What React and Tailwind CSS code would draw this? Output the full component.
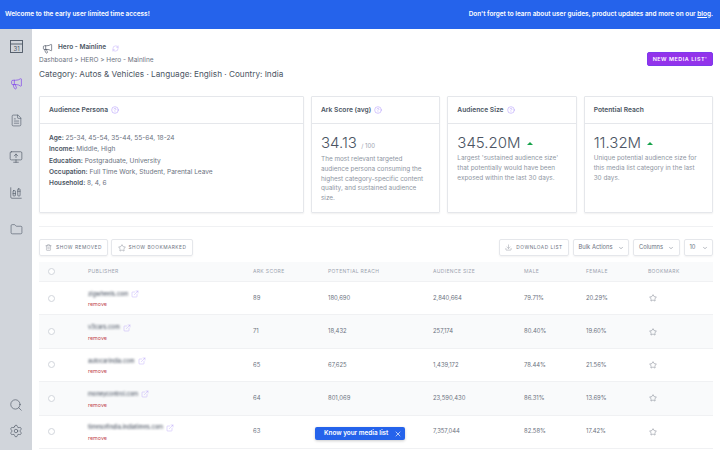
import React from "react";
import { Megaphone, FileText, MonitorUp, Folder, Search, Settings, RefreshCw, HelpCircle, ExternalLink, Star, Trash2, Download, ChevronDown, X, ChartColumnStacked } from "lucide-react";

const rows = [
  ["zigwheels.com", 89, "180,690", "2,840,664", "79.71%", "20.29%"],
  ["v3cars.com", 71, "18,432", "257,174", "80.40%", "19.60%"],
  ["autocarindia.com", 65, "67,625", "1,439,172", "78.44%", "21.56%"],
  ["moneycontrol.com", 64, "801,069", "23,590,430", "86.31%", "13.69%"],
  ["timesofindia.indiatimes.com", 63, "", "7,357,044", "82.58%", "17.42%"],
];

function Q() {
  return <HelpCircle size={8} strokeWidth={1.4} className="text-[#a78bfa] shrink-0" />;
}

function Card({ title, q = true, className, children }) {
  return (
    <div className={"border border-[#e5e7eb] rounded-[1px] flex flex-col shadow-[0_1px_2px_rgba(0,0,0,0.06)] " + className}>
      <div className="h-[27px] shrink-0 border-b border-[#e5e7eb] flex items-center gap-[3px] px-[9px] text-[6.7px] font-semibold text-[#4b5563]">
        {title}
        {q && <Q />}
      </div>
      <div className="flex-1 px-[9px]">{children}</div>
    </div>
  );
}

function Btn({ children, className = "" }) {
  return (
    <div className={"h-[17px] shrink-0 whitespace-nowrap border border-[#e5e7eb] rounded-[2px] flex items-center text-[#6b7280] shadow-[0_1px_2px_rgba(0,0,0,0.05)] " + className}>
      {children}
    </div>
  );
}

function Triangle() {
  return <span className="w-0 h-0 border-l-[3px] border-r-[3px] border-b-[3.5px] border-l-transparent border-r-transparent border-b-[#16a34a] inline-block" />;
}

function CalendarIcon() {
  return (
    <svg width="13" height="13" viewBox="0 0 13 13" fill="none" stroke="#4b5563" strokeWidth="0.9">
      <rect x="0.5" y="0.5" width="12" height="12" />
      <path d="M0.5 4h12" />
      <text x="6.5" y="11" textAnchor="middle" fontSize="6" fill="#4b5563" stroke="none" fontFamily="Inter, sans-serif">31</text>
    </svg>
  );
}

const grid = "grid grid-cols-[49px_165px_75px_105px_91px_62px_62px_1fr] items-center";
const check = "ml-[9px] w-[7px] h-[7px] rounded-full border border-[#d1d5db] bg-white";

export default function App() {
  return (
    <div className="w-[720px] h-[450px] overflow-hidden bg-white flex flex-col font-['Inter',sans-serif] relative">
      <div className="h-[29px] shrink-0 bg-[#2563eb] text-white font-semibold text-[6.45px] flex items-center justify-between pl-[5px] pr-[7px]">
        <span>Welcome to the early user limited time access!</span>
        <span>Don't forget to learn about user guides, product updates and more on our <u>blog</u>.</span>
      </div>
      <div className="flex flex-1 min-h-0">
        <div className="w-[32px] shrink-0 bg-[#d1d5db] flex flex-col items-center text-[#4b5563] pt-[11px] pb-[12px]">
          <CalendarIcon />
          <Megaphone size={13} strokeWidth={1.2} className="text-[#7c3aed] mt-[24px]" />
          <FileText size={13} strokeWidth={1.1} className="mt-[24px]" />
          <MonitorUp size={14} strokeWidth={1.1} className="mt-[23px]" />
          <ChartColumnStacked size={14} strokeWidth={1.1} className="mt-[22px]" />
          <Folder size={13} strokeWidth={1.1} className="mt-[23px]" />
          <Search size={14} strokeWidth={1.1} className="mt-auto" />
          <Settings size={14} strokeWidth={1.1} className="mt-[12px]" />
        </div>
        <div className="flex-1 min-w-0 pl-[7px] pr-[7px]">
          <div className="h-[67px] relative">
            <div className="flex items-center pt-[10px] h-[28px] pl-[3px]">
              <Megaphone size={11} strokeWidth={1.3} className="text-[#374151] mr-[5px]" />
              <span className="text-[6.5px] font-semibold text-[#4b5563]">Hero - Mainline</span>
              <RefreshCw size={7} strokeWidth={1.2} className="text-[#a78bfa] ml-[6px]" />
            </div>
            <div className="text-[6.5px] leading-[10px] text-[#6b7280] -mt-[2px]">Dashboard &gt; HERO &gt; Hero - Mainline</div>
            <div className="text-[8.2px] leading-[12px] text-[#4b5563] mt-[3px]">Category: Autos &amp; Vehicles · Language: English · Country: India</div>
            <div className="absolute right-0 top-[23px] w-[66px] h-[14px] rounded-[2px] bg-[#9333ea] border border-[#7c3aed] text-white text-[5.4px] font-semibold tracking-[0.55px] flex items-center justify-center">NEW MEDIA LIST'</div>
          </div>
          <div className="flex h-[117px] gap-[7px]">
            <Card title="Audience Persona" className="w-[265px] shrink-0">
              <div className="text-[6.55px] leading-[11.3px] text-[#6b7280] pt-[9px]">
                <div><b className="font-semibold text-[#4b5563]">Age:</b> 25-34, 45-54, 35-44, 55-64, 18-24</div>
                <div><b className="font-semibold text-[#4b5563]">Income:</b> Middle, High</div>
                <div><b className="font-semibold text-[#4b5563]">Education:</b> Postgraduate, University</div>
                <div><b className="font-semibold text-[#4b5563]">Occupation:</b> Full Time Work, Student, Parental Leave</div>
                <div><b className="font-semibold text-[#4b5563]">Household:</b> 8, 4, 6</div>
              </div>
            </Card>
            <Card title="Ark Score (avg)" className="flex-1 min-w-0">
              <div className="pt-[9px] text-[#4b5563] font-light text-[15px] leading-[20px]">34.13 <span className="text-[6px] font-normal text-[#9ca3af]">/ 100</span></div>
              <div className="text-[6.4px] leading-[9.8px] text-[#8f96a3] -mt-[1px]">The most relevant targeted audience persona consuming the highest category-specific content quality, and sustained audience size.</div>
            </Card>
            <Card title="Audience Size" className="flex-1 min-w-0">
              <div className="pt-[9px] text-[#4b5563] font-light text-[15px] leading-[20px] flex items-center gap-[6px]">345.20M <Triangle /></div>
              <div className="text-[6.4px] leading-[9.8px] text-[#8f96a3] mt-[1px]">Largest 'sustained audience size' that potentially would have been exposed within the last 30 days.</div>
            </Card>
            <Card title="Potential Reach" q={false} className="flex-1 min-w-0">
              <div className="pt-[9px] text-[#4b5563] font-light text-[15px] leading-[20px] flex items-center gap-[6px]">11.32M <Triangle /></div>
              <div className="text-[6.4px] leading-[9.8px] text-[#8f96a3] mt-[1px]">Unique potential audience size for this media list category in the last 30 days.</div>
            </Card>
          </div>
          <div className="border-t border-[#f0f1f3] mt-[13px] pt-[12px] flex items-center">
            <Btn className="w-[69px] justify-center gap-[4px] text-[4.8px] tracking-[0.5px]"><Trash2 size={7} strokeWidth={1.2} />SHOW REMOVED</Btn>
            <Btn className="w-[82px] justify-center gap-[3px] text-[4.8px] tracking-[0.5px] ml-[3px]"><Star size={8} strokeWidth={1.2} />SHOW BOOKMARKED</Btn>
            <Btn className="ml-auto w-[70px] justify-center gap-[4px] text-[4.8px] tracking-[0.5px]"><Download size={7} strokeWidth={1.2} />DOWNLOAD LIST</Btn>
            <Btn className="ml-[4px] w-[56px] justify-center gap-[5px] text-[5.8px]">Bulk Actions<ChevronDown size={6} /></Btn>
            <Btn className="ml-[4px] w-[47px] justify-center gap-[5px] text-[5.8px]">Columns<ChevronDown size={6} /></Btn>
            <Btn className="ml-[4px] w-[29px] justify-center gap-[6px] text-[5.8px]">10<ChevronDown size={6} /></Btn>
          </div>
          <div className={grid + " h-[20px] mt-[6px] bg-[#f9fafb] border-b border-[#f0f1f3] text-[5px] tracking-[0.35px] text-[#9ca3af]"}>
            <span className={check} />
            <span>PUBLISHER</span><span>ARK SCORE</span><span>POTENTIAL REACH</span><span>AUDIENCE SIZE</span><span>MALE</span><span>FEMALE</span><span>BOOKMARK</span>
          </div>
          {rows.map((r, i) => (
            <div key={r[0]} className={grid + " h-[33.4px] border-b border-[#f0f1f3] text-[5.9px] text-[#6b7280] " + (i % 2 ? "bg-[#f9fafb]" : "bg-white")}>
              <span className={check} />
              <div className="pt-[2px]">
                <div className="flex items-center gap-[3px]">
                  <span className="blur-[0.8px] text-[5.7px] text-[#374151]">{r[0]}</span>
                  <ExternalLink size={8} strokeWidth={1} className="text-[#a78bfa]" />
                </div>
                <div className="text-[5.4px] text-[#c2474f] mt-[2px]">remove</div>
              </div>
              <span>{r[1]}</span><span>{r[2]}</span><span>{r[3]}</span><span>{r[4]}</span><span>{r[5]}</span>
              <Star size={8} strokeWidth={1} className="ml-[1px] text-[#374151]" />
            </div>
          ))}
        </div>
      </div>
      <div className="absolute left-[315px] top-[427px] w-[90px] h-[13px] rounded-[2px] bg-[#2563eb] text-white text-[6.4px] font-semibold flex items-center pl-[9px] gap-[6px] shadow-[0_1px_3px_rgba(0,0,0,0.2)]">
        Know your media list <X size={8} strokeWidth={2} />
      </div>
    </div>
  );
}
